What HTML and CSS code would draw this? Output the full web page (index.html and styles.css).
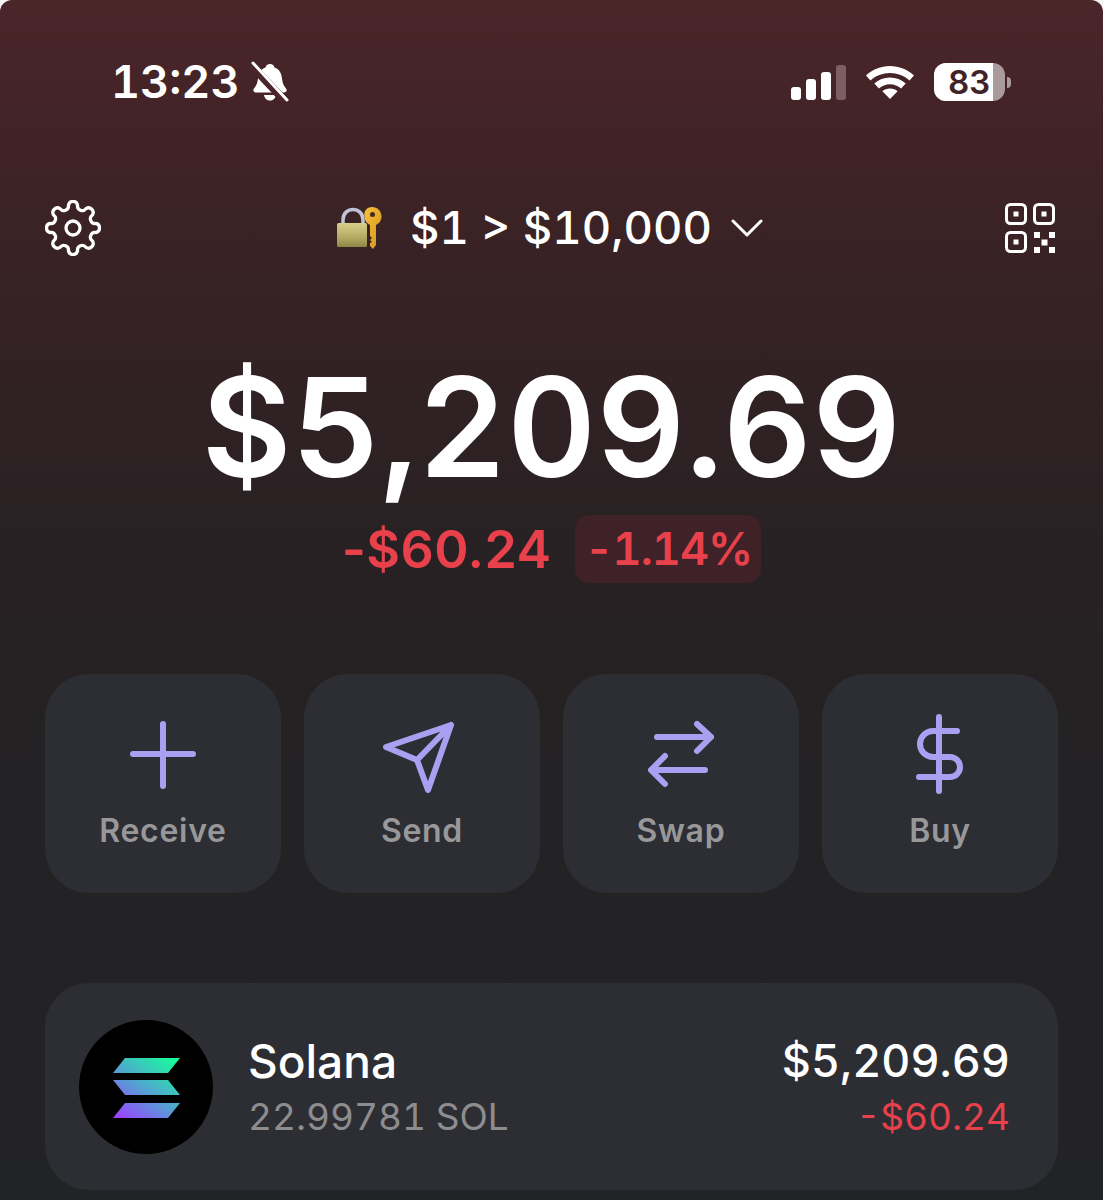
FILE: index.html
```html
<!DOCTYPE html>
<html lang="en">
<head>
  <meta charset="UTF-8" />
  <title>Wallet</title>
  <link rel="stylesheet" href="styles.css">
</head>
<body>
  <div class="screen">
    <div class="status-bar">
      <div class="status-left">
        <span class="time">13:23</span>
        <svg class="bell" width="38" height="42" viewBox="0 0 38 42">
          <path d="M19 3c2.500 0 4 1.500 4.500 3.500 5 1.500 7 6 7.500 11 .4 4 1.500 7 4 10 1.500 2 .5 4-2 4H5c-2.500 0-3.500-2-2-4 2.500-3 3.600-6 4-10 .5-5 2.500-9.500 7.500-11C15 4.500 16.500 3 19 3z" fill="#fff"/>
          <path d="M13 34h12c-.5 3.500-3 5.500-6 5.500s-5.500-2-6-5.500z" fill="#fff"/>
          <path d="M0 4l34 36" stroke="#4a2529" stroke-width="8"/>
          <path d="M2 2l34 37" stroke="#fff" stroke-width="3" stroke-linecap="round"/>
        </svg>
      </div>
      <div class="status-right">
        <div class="signal">
          <span class="bar bar-1"></span>
          <span class="bar bar-2"></span>
          <span class="bar bar-3"></span>
          <span class="bar bar-4"></span>
        </div>
        <svg class="wifi" width="48" height="33" viewBox="0 0 48 33">
          <path d="M24 0c9 0 17.500 3.500 24 9.500l-4.500 5C38.300 9.800 31.400 7 24 7S9.700 9.800 4.500 14.500L0 9.500C6.500 3.500 15 0 24 0z" fill="#fff"/>
          <path d="M24 11.500c6 0 11.500 2.300 15.700 6l-4.600 5c-3-2.600-6.900-4.200-11.100-4.200s-8.100 1.600-11.100 4.200l-4.600-5c4.200-3.700 9.700-6 15.700-6z" fill="#fff"/>
          <path d="M24 22.500c3 0 5.600 1 7.600 2.800L24 33l-7.600-7.700c2-1.800 4.600-2.800 7.600-2.800z" fill="#fff"/>
        </svg>
        <div class="battery">
          <div class="battery-body">
            <span class="battery-fill"></span>
            <span class="battery-level">83</span>
          </div>
          <span class="battery-nub"></span>
        </div>
      </div>
    </div>

    <div class="top-nav">
      <svg class="gear" width="56" height="56" viewBox="0 0 60 60">
        <path d="M34.880 5.480A5 5 0 0 0 43.890 9.210A5 5 0 0 1 50.790 16.110A5 5 0 0 0 54.520 25.120A5 5 0 0 1 54.520 34.880A5 5 0 0 0 50.790 43.890A5 5 0 0 1 43.890 50.790A5 5 0 0 0 34.880 54.520A5 5 0 0 1 25.120 54.520A5 5 0 0 0 16.110 50.790A5 5 0 0 1 9.210 43.890A5 5 0 0 0 5.480 34.880A5 5 0 0 1 5.480 25.120A5 5 0 0 0 9.210 16.110A5 5 0 0 1 16.110 9.210A5 5 0 0 0 25.120 5.480A5 5 0 0 1 34.880 5.480Z" fill="none" stroke="#fff" stroke-width="3.500"/>
        <circle cx="30" cy="30" r="7.500" fill="none" stroke="#fff" stroke-width="3.500"/>
      </svg>
      <div class="wallet-name">
        <svg class="lock-key" width="46" height="42" viewBox="0 0 46 42">
          <defs>
            <linearGradient id="brass" x1="0" y1="0" x2="0" y2="1">
              <stop offset="0" stop-color="#d8cf8c"/>
              <stop offset="0.6" stop-color="#b5aa63"/>
              <stop offset="1" stop-color="#8f8648"/>
            </linearGradient>
            <linearGradient id="keygold" x1="0" y1="0" x2="1" y2="1">
              <stop offset="0" stop-color="#f6c23c"/>
              <stop offset="1" stop-color="#d3921a"/>
            </linearGradient>
          </defs>
          <path d="M6 17v-4C6 6 11 2.500 16 2.500S26 6 26 13v4" fill="none" stroke="#bfc3d6" stroke-width="3.500"/>
          <rect x="0" y="16" width="30" height="24" rx="1.500" fill="url(#brass)"/>
          <path d="M35 0c5.500 0 9.500 4 9.500 9.500 0 4-2.200 7-5.500 8.500v20l-3 4-3-3v-3l2-1-2-2 2-2-2-2V18c-3.300-1.500-5.500-4.500-5.500-8.500C26.500 4 30 0 35 0z" fill="url(#keygold)"/>
          <circle cx="35.500" cy="7.500" r="2.500" fill="#4a2a20"/>
        </svg>
        <span class="wallet-title">$1 &gt; $10,000</span>
        <svg class="chevron" width="32" height="20" viewBox="0 0 32 20">
          <path d="M2 3l14 14L30 3" fill="none" stroke="#fff" stroke-width="3" stroke-linecap="round" stroke-linejoin="round"/>
        </svg>
      </div>
      <svg class="qr" width="50" height="50" viewBox="0 0 50 50">
        <rect x="1.500" y="1.500" width="19" height="19" rx="4" fill="none" stroke="#fff" stroke-width="3"/>
        <rect x="29.500" y="1.500" width="19" height="19" rx="4" fill="none" stroke="#fff" stroke-width="3"/>
        <rect x="1.500" y="29.500" width="19" height="19" rx="4" fill="none" stroke="#fff" stroke-width="3"/>
        <rect x="8.500" y="8.500" width="5" height="5" fill="#fff"/>
        <rect x="36.500" y="8.500" width="5" height="5" fill="#fff"/>
        <rect x="8.500" y="36.500" width="5" height="5" fill="#fff"/>
        <rect x="29" y="29" width="6" height="6" fill="#fff"/>
        <rect x="44" y="29" width="6" height="6" fill="#fff"/>
        <rect x="36.500" y="36.500" width="6" height="6" fill="#fff"/>
        <rect x="29" y="44" width="6" height="6" fill="#fff"/>
        <rect x="44" y="44" width="6" height="6" fill="#fff"/>
      </svg>
    </div>

    <div class="balance">$5,209.69</div>
    <div class="change">
      <span class="change-value">-$60.24</span>
      <span class="change-pill">-1.14%</span>
    </div>

    <div class="actions">
      <div class="action">
        <svg width="80" height="80" viewBox="0 0 80 80">
          <path d="M40 10v62M10 40h60" class="icon-line"/>
        </svg>
        <span class="action-label">Receive</span>
      </div>
      <div class="action">
        <svg width="80" height="80" viewBox="0 0 80 80">
          <path d="M69 11L4 33l31 13 11 30zM69 11L35 46" class="icon-line"/>
        </svg>
        <span class="action-label">Send</span>
      </div>
      <div class="action">
        <svg width="80" height="80" viewBox="0 0 80 80">
          <path d="M16 23h54M56 10l14 13-14 14M64 56H10M24 42L10 56l14 14" class="icon-line"/>
        </svg>
        <span class="action-label">Swap</span>
      </div>
      <div class="action">
        <svg width="80" height="80" viewBox="0 0 80 80">
          <path d="M39 3v74M57 17H33a13 13 0 0 0 0 26h17a10 10 0 0 1 0 20H19" class="icon-line"/>
        </svg>
        <span class="action-label">Buy</span>
      </div>
    </div>

    <div class="token-card">
      <svg class="token-icon" width="134" height="134" viewBox="0 0 134 134">
        <defs>
          <linearGradient id="sol" gradientUnits="userSpaceOnUse" x1="45" y1="100" x2="90" y2="36">
            <stop offset="0" stop-color="#9945ff"/>
            <stop offset="0.5" stop-color="#4fa8cf"/>
            <stop offset="1" stop-color="#19fb9b"/>
          </linearGradient>
        </defs>
        <circle cx="67" cy="67" r="67" fill="#000"/>
        <path d="M46 38h55L89 53H34z" fill="url(#sol)"/>
        <path d="M34 60h55l12 15H46z" fill="url(#sol)"/>
        <path d="M46 83h55L89 98H34z" fill="url(#sol)"/>
      </svg>
      <div class="token-info">
        <span class="token-name">Solana</span>
        <span class="token-amount">22.99781 SOL</span>
      </div>
      <div class="token-values">
        <span class="token-usd">$5,209.69</span>
        <span class="token-change">-$60.24</span>
      </div>
    </div>
  </div>
</body>
</html>
```

FILE: styles.css
```css
* {
  box-sizing: border-box;
}
body {
  margin: 0;
  background: #f4f4f4;
  font-family: Inter, 'Liberation Sans', sans-serif;
  font-variant-numeric: tabular-nums;
}
.screen {
  width: 1103px;
  height: 1200px;
  padding: 60px 45px 0;
  overflow: hidden;
  border-radius: 12px 12px 0 0;
  background: linear-gradient(to bottom, #4b2529 0, #3a2225 230px, #282123 540px, #232224 800px, #222325 1200px);
  color: #fff;
}
.status-bar {
  display: flex;
  justify-content: space-between;
  align-items: center;
  height: 44px;
  padding: 0 47px 0 66px;
}
.status-left {
  display: flex;
  align-items: center;
  gap: 11px;
}
.time {
  font-size: 45px;
  font-weight: 600;
  line-height: 44px;
}
.status-right {
  display: flex;
  align-items: center;
}
.signal {
  display: flex;
  align-items: flex-end;
  gap: 5px;
  height: 36px;
}
.bar {
  width: 10px;
  border-radius: 3px;
  background: #fff;
}
.bar-1 {
  height: 13px;
}
.bar-2 {
  height: 21px;
}
.bar-3 {
  height: 28px;
}
.bar-4 {
  height: 35px;
  background: #7d5f62;
}
.wifi {
  margin-left: 20px;
}
.battery {
  display: flex;
  align-items: center;
  margin-left: 20px;
}
.battery-body {
  position: relative;
  width: 71px;
  height: 38px;
  overflow: hidden;
  border-radius: 12px;
  background: #a99a9c;
}
.battery-fill {
  display: block;
  width: 59px;
  height: 100%;
  background: #fff;
}
.battery-level {
  position: absolute;
  top: 0;
  left: 14px;
  color: #3f2327;
  font-size: 33px;
  font-weight: 600;
  line-height: 38px;
}
.battery-nub {
  width: 4px;
  height: 11px;
  margin-left: 2px;
  border-radius: 0 4px 4px 0;
  background: #a99a9c;
}
.top-nav {
  display: flex;
  justify-content: space-between;
  align-items: center;
  height: 56px;
  margin-top: 96px;
  padding-right: 3px;
}
.wallet-name {
  display: flex;
  align-items: center;
  margin-right: 6px;
}
.wallet-title {
  margin-left: 27px;
  font-size: 45.500px;
  font-weight: 500;
  line-height: 56px;
}
.chevron {
  margin-left: 19px;
}
.balance {
  margin-top: 96px;
  font-size: 138px;
  font-weight: 600;
  line-height: 150px;
  text-align: center;
}
.change {
  display: flex;
  justify-content: center;
  align-items: center;
  gap: 24px;
  margin-top: 13px;
  color: #e8414c;
  font-weight: 600;
}
.change-value {
  font-size: 52px;
  font-variant-numeric: normal;
  letter-spacing: 0.4px;
}
.change-pill {
  padding: 0 9px;
  border-radius: 14px;
  background: #3e2227;
  font-size: 45px;
  letter-spacing: -1px;
  line-height: 68px;
}
.actions {
  display: grid;
  grid-template-columns: repeat(4, 1fr);
  gap: 23px;
  margin-top: 91px;
}
.action {
  display: flex;
  flex-direction: column;
  align-items: center;
  height: 219px;
  padding-top: 40px;
  border-radius: 44px;
  background: #2d2e33;
}
.icon-line {
  fill: none;
  stroke: #ab9ff2;
  stroke-width: 6;
  stroke-linecap: round;
  stroke-linejoin: round;
}
.action-label {
  margin-top: 17px;
  color: #98989a;
  font-size: 32px;
  font-weight: 600;
  letter-spacing: 0.7px;
  line-height: 40px;
}
.token-card {
  display: flex;
  align-items: center;
  height: 207px;
  margin-top: 90px;
  padding: 4px 48px 0 34px;
  border-radius: 44px;
  background: #2d2e33;
}
.token-icon {
  margin-top: -4px;
}
.token-info {
  display: flex;
  flex-direction: column;
  gap: 8px;
  margin-left: 35px;
}
.token-values {
  display: flex;
  flex-direction: column;
  align-items: flex-end;
  gap: 8px;
  margin-left: auto;
}
.token-name {
  font-size: 46px;
  font-weight: 500;
  line-height: 48px;
}
.token-usd {
  font-size: 45px;
  font-weight: 500;
  line-height: 48px;
}
.token-amount {
  color: #8d8d90;
  font-size: 37px;
  line-height: 48px;
}
.token-change {
  color: #e8414c;
  font-size: 37px;
  line-height: 48px;
}
```
